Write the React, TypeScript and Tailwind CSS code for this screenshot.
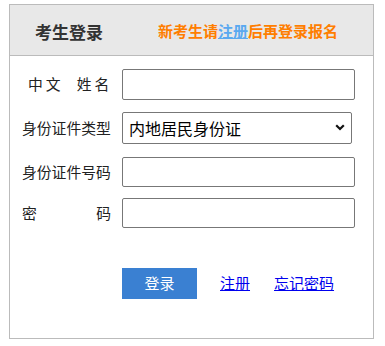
import React from "react";

const font = { fontFamily: '"Noto Sans CJK SC", "Noto Sans", sans-serif' };

const Label = ({ children }: { children: React.ReactNode }) => (
  <div className="w-[89px] shrink-0 whitespace-nowrap text-[14.8px] leading-none text-[#222]">
    {children}
  </div>
);

export default function App() {
  return (
    <div className="pl-[9px] pt-[4px] bg-white" style={font}>
      <div className="w-[365px] h-[335px] border border-[#bbb] bg-white">
        {/* header */}
        <div className="h-[51px] bg-[#e8e8e8] border-b border-[#bbb] flex items-center pt-[3px]">
          <div className="pl-[25px] w-[148px] text-[17px] font-bold text-[#333]">考生登录</div>
          <div className="text-[15px] font-bold text-[#ff7e00] whitespace-nowrap">
            新考生请
            <a href="#" className="text-[#5aa9f0] underline">
              注册
            </a>
            后再登录报名
          </div>
        </div>

        {/* form */}
        <div className="pl-[12px] pt-[13px] flex flex-col">
          <div className="flex items-center gap-[11px]">
            <Label>
              <div className="flex pl-[6px]">
                <span>中</span>
                <span className="ml-[3px]">文</span>
                <span className="ml-[16px]">姓</span>
                <span className="ml-[3px]">名</span>
              </div>
            </Label>
            <input className="w-[233px] h-[31px] border border-[#777] rounded-[2px] outline-none px-1" />
          </div>

          <div className="flex items-center gap-[11px] mt-[12px]">
            <Label>身份证件类型</Label>
            <div className="relative w-[230px] h-[32px]">
              <select className="appearance-none w-full h-full border border-[#777] rounded-[2px] pl-[6px] text-[16px] text-black bg-white outline-none">
                <option>内地居民身份证</option>
              </select>
              <svg
                className="absolute right-[7px] top-[12px] pointer-events-none"
                width="10"
                height="7"
                viewBox="0 0 10 7"
              >
                <path d="M1.2 1.2 L5 5 L8.8 1.2" fill="none" stroke="#111" strokeWidth="2.2" />
              </svg>
            </div>
          </div>

          <div className="flex items-center gap-[11px] mt-[13px]">
            <Label>身份证件号码</Label>
            <input className="w-[233px] h-[30px] border border-[#777] rounded-[2px] outline-none px-1" />
          </div>

          <div className="flex items-center gap-[11px] mt-[11px]">
            <Label>
              <div className="flex justify-between">
                <span>密</span>
                <span>码</span>
              </div>
            </Label>
            <input
              type="password"
              className="w-[233px] h-[30px] border border-[#777] rounded-[2px] outline-none px-1"
            />
          </div>

          <div className="flex items-center mt-[40px] pl-[100px]">
            <button className="w-[75px] h-[31px] bg-[#3a80d2] text-white text-[15px]">登录</button>
            <a href="#" className="ml-[23px] text-[15px] text-[#0000ee] underline">
              注册
            </a>
            <a href="#" className="ml-[24px] text-[15px] text-[#0000ee] underline">
              忘记密码
            </a>
          </div>
        </div>
      </div>
    </div>
  );
}
